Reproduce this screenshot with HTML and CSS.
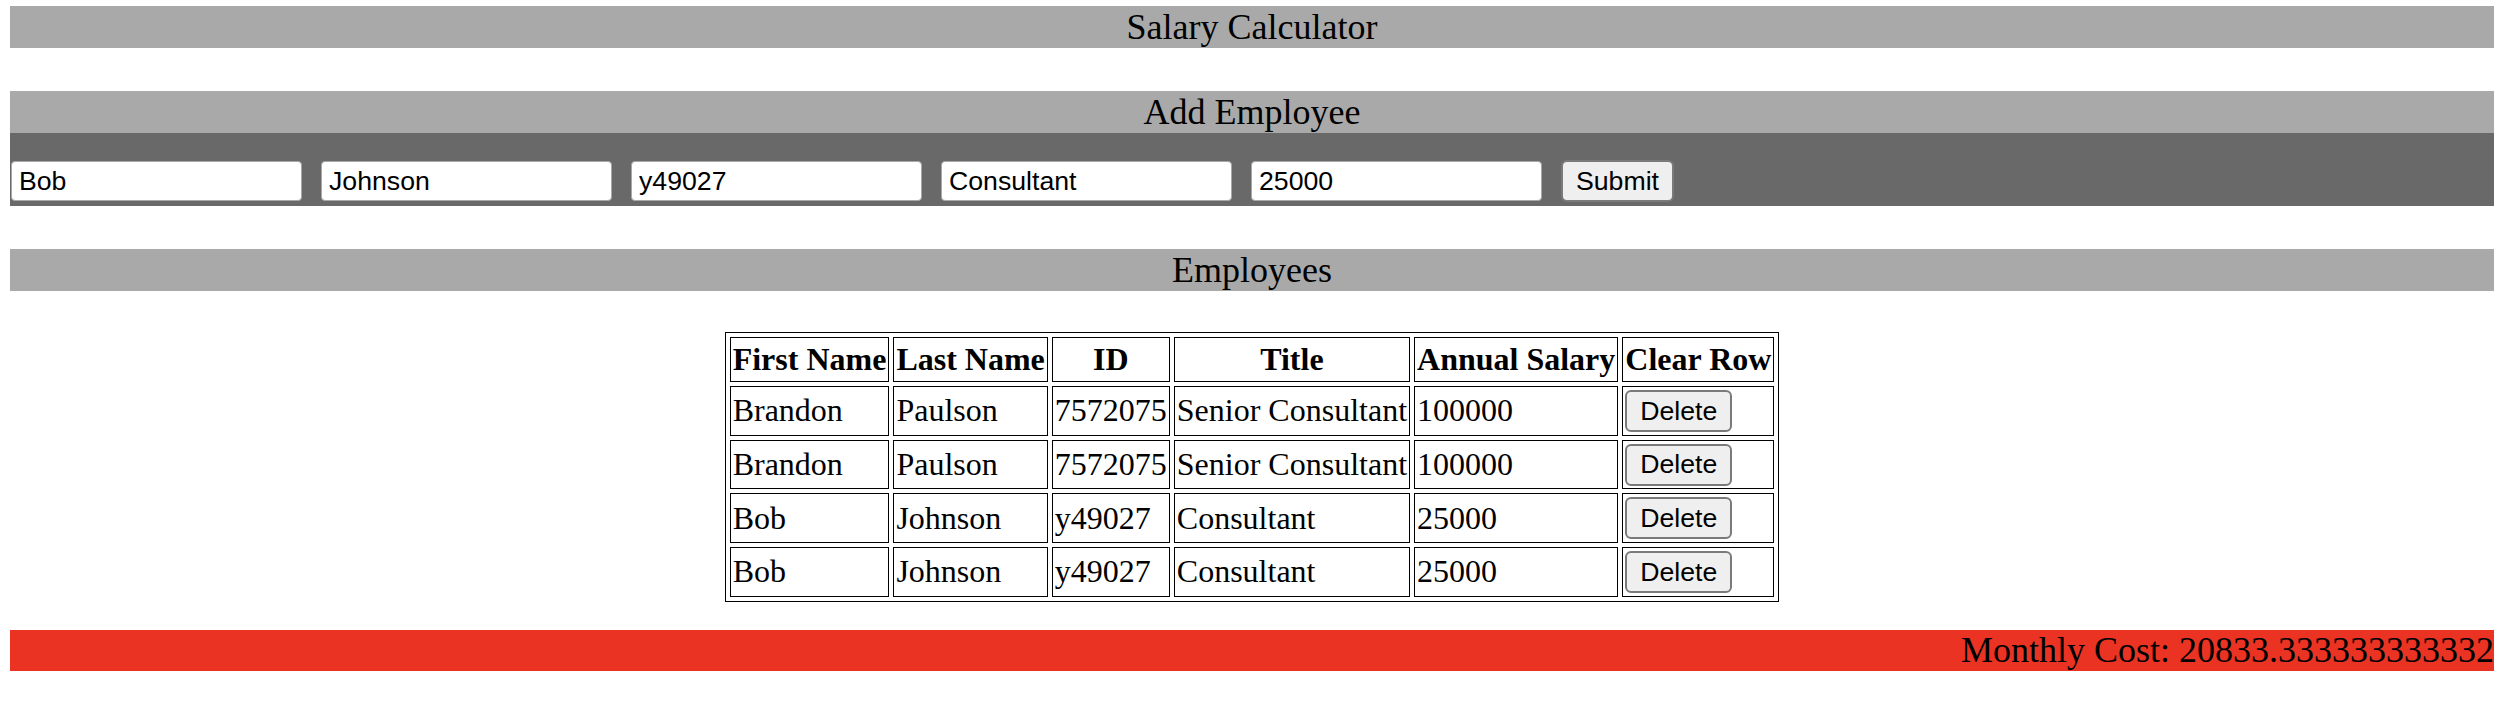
FILE: index.html
```html
<!DOCTYPE html>
<html>
<head>
<meta charset="utf-8">
<title>Salary Calculator</title>
<link rel="stylesheet" href="styles.css">
</head>
<body>
  <div class="bar bar-title">Salary Calculator</div>
  <div class="bar bar-add">Add Employee</div>
  <div class="form-area">
    <input class="field" type="text" value="Bob">
    <input class="field" type="text" value="Johnson">
    <input class="field" type="text" value="y49027">
    <input class="field" type="text" value="Consultant">
    <input class="field" type="text" value="25000">
    <button class="btn">Submit</button>
  </div>
  <div class="bar bar-emp">Employees</div>
  <div class="table-wrap">
    <table class="emp-table">
      <thead>
        <tr><th>First Name</th><th>Last Name</th><th>ID</th><th>Title</th><th>Annual Salary</th><th>Clear Row</th></tr>
      </thead>
      <tbody>
        <tr><td>Brandon</td><td>Paulson</td><td>7572075</td><td>Senior Consultant</td><td>100000</td><td><button class="btn">Delete</button></td></tr>
        <tr><td>Brandon</td><td>Paulson</td><td>7572075</td><td>Senior Consultant</td><td>100000</td><td><button class="btn">Delete</button></td></tr>
        <tr><td>Bob</td><td>Johnson</td><td>y49027</td><td>Consultant</td><td>25000</td><td><button class="btn">Delete</button></td></tr>
        <tr><td>Bob</td><td>Johnson</td><td>y49027</td><td>Consultant</td><td>25000</td><td><button class="btn">Delete</button></td></tr>
      </tbody>
    </table>
  </div>
  <div class="bar bar-cost">Monthly Cost: 20833.333333333332</div>
</body>
</html>
```

FILE: styles.css
```css
html, body {
  background: #ffffff;
}
body {
  margin: 6px 12px 0 10px;
  font-family: "Liberation Serif", "Times New Roman", serif;
  color: #000000;
}
.bar {
  background: #a9a9a9;
  height: 42px;
  line-height: 42px;
  font-size: 36px;
  text-align: center;
  white-space: nowrap;
}
.bar-add {
  margin-top: 43px;
}
.form-area {
  background: #696969;
  display: flex;
  align-items: center;
  gap: 19px;
  padding: 28px 0 5px 1px;
  height: 40px;
}
.field {
  box-sizing: border-box;
  width: 291px;
  height: 40px;
  margin: 0;
  padding: 0 7px;
  border: 1px solid #a8a8a8;
  border-radius: 4px;
  background: #ffffff;
  font-family: "Liberation Sans", Arial, sans-serif;
  font-size: 26.67px;
  color: #000000;
}
.btn {
  box-sizing: border-box;
  height: 42px;
  margin: 0;
  padding: 0 13px;
  border: 2px solid #7a7a7a;
  border-radius: 6px;
  background: #efefef;
  font-family: "Liberation Sans", Arial, sans-serif;
  font-size: 26.67px;
  color: #000000;
}
.bar-emp {
  margin-top: 43px;
}
.table-wrap {
  display: flex;
  justify-content: center;
  margin-top: 41px;
}
.emp-table {
  border-collapse: separate;
  border-spacing: 4px;
  border: 1px solid #000000;
  font-size: 32px;
}
.emp-table th,
.emp-table td {
  border: 1px solid #000000;
  white-space: nowrap;
}
.emp-table th {
  padding: 3px 2px;
  font-weight: bold;
  text-align: center;
}
.emp-table td {
  padding: 2.5px 2px;
  text-align: left;
}
.emp-table td .btn {
  vertical-align: middle;
}
.bar-cost {
  margin-top: 28px;
  background: #ea3323;
  text-align: right;
  height: 41px;
  line-height: 41px;
}
```
